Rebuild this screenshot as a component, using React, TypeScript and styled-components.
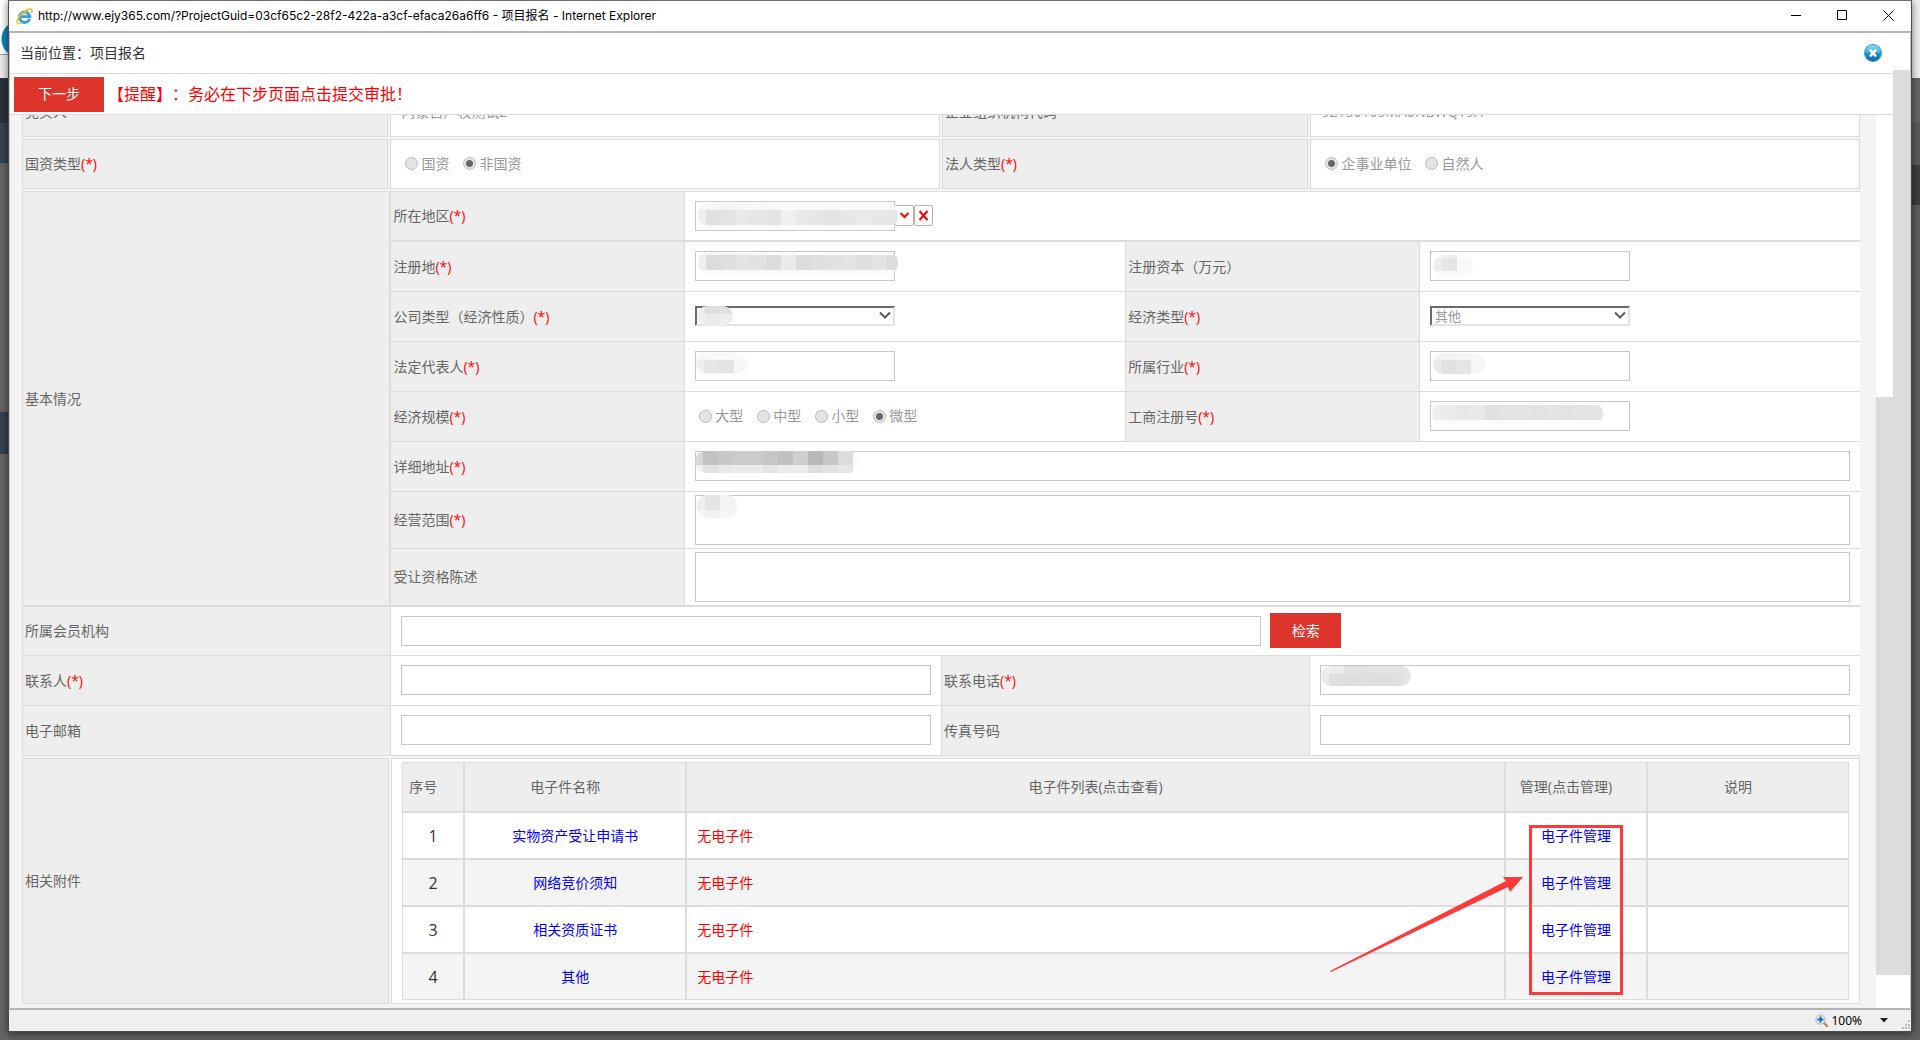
import React, { useLayoutEffect, useRef } from "react";
import styled, { createGlobalStyle, css } from "styled-components";

const line = "#dcdcdc";
const red = "#dd352c";

const GlobalStyle = createGlobalStyle`
  *, *::before, *::after { box-sizing: border-box; }
  body { margin: 0; overflow: hidden; }
  body, button, input, select, textarea {
    font-family: "Open Sans", "Noto Sans CJK SC", sans-serif;
    font-size: 14px;
    line-height: 20px;
    text-spacing-trim: space-all;
  }
`;

/* ---------- desktop and window frame ---------- */

const Desktop = styled.div`
  height: 100vh;
  padding: 0 8px 8px;
  background:
    radial-gradient(circle at 20px 39px, #0a86b8 18px, transparent 19px) left top / 8px 60px no-repeat,
    linear-gradient(#fff 54px, #9a9a9a 54px 55px, #ececec 55px 78px, #2b323c 78px 123px, #354152 123px 163px,
      #656565 163px 412px, #354152 412px 454px, #646464 454px) left / 8px 100% no-repeat,
    linear-gradient(#f0f0f0 78px, #646464 78px 123px, #5b5b5b 123px 165px, #3d3d3d 165px 205px, #5f5f5f 205px)
      right / 8px 100% no-repeat,
    #5e5e5e;
`;

const Window = styled.div`
  height: 100%;
  display: flex;
  flex-direction: column;
  background: #fff;
  border: 1px solid #4b4b4b;
  border-top-color: #6d6d6d;
  box-shadow: 0 1px 8px rgba(0, 0, 0, 0.55);
`;

const TitleBar = styled.header`
  flex: none;
  height: 30px;
  padding-left: 7px;
  display: flex;
  align-items: center;
  gap: 5px;
`;

const Title = styled.h1`
  flex: 1;
  margin: 0;
  font: 400 12px/16px Inter, "Noto Sans CJK SC", sans-serif;
  color: #000;
`;

const CaptionButtons = styled.div`
  align-self: flex-start;
  display: flex;
`;

const CaptionButton = styled.button`
  width: 46px;
  height: 28px;
  padding: 0;
  border: 0;
  background: none;
  display: grid;
  place-items: center;
`;

const Viewport = styled.div`
  flex: 1;
  min-height: 0;
  display: flex;
  border: solid #c4c4c4;
  border-width: 2px 1px;
  border-top-color: #b4b4b4;
  border-bottom-color: #b4b4b4;
`;

const Page = styled.main`
  flex: 1;
  min-width: 0;
  display: flex;
  flex-direction: column;
`;

const ScrollTrack = styled.div<{ $before: number }>`
  flex: none;
  width: 17px;
  padding: ${(p) => p.$before}px 0 33px;
  background: #fff;
`;

const ScrollThumb = styled.div`
  height: 100%;
  background: ${line};
`;

const StatusBar = styled.footer`
  flex: none;
  height: 21px;
  display: flex;
  align-items: center;
  justify-content: flex-end;
  background: #efefef;
  color: #000;
`;

const ZoomLevel = styled.button`
  display: flex;
  align-items: center;
  gap: 2px;
  margin-right: 14px;
  padding: 0;
  border: 0;
  background: none;
  font: 400 12px/16px "Noto Sans", sans-serif;

  svg:last-child { margin-left: 16px; }
`;

/* ---------- page header ---------- */

const Breadcrumb = styled.div`
  flex: none;
  height: 41px;
  padding: 0 10px;
  display: flex;
  align-items: center;
  justify-content: space-between;
  border-bottom: 1px solid ${line};
  color: #333;
`;

const IconButton = styled.button`
  display: flex;
  padding: 0;
  border: 0;
  background: none;
`;

const Toolbar = styled.div`
  flex: none;
  height: 41px;
  padding-left: 4px;
  display: flex;
  align-items: center;
  gap: 4px;
  border-bottom: 1px solid ${line};
`;

const RedButton = styled.button<{ $wide?: boolean }>`
  flex: none;
  width: ${(p) => (p.$wide ? 90 : 71)}px;
  height: 35px;
  padding: 0;
  border: 0;
  background: ${red};
  color: #fff;
`;

const Reminder = styled.strong`
  font-size: 16px;
  font-weight: 400;
  color: #f00;
`;

/* ---------- form ---------- */

const FormArea = styled.div`
  flex: 1;
  min-height: 0;
  display: flex;
`;

const Scroller = styled.div`
  flex: 1;
  min-width: 0;
  overflow: hidden;
  background: #f4f4f4;
`;

const Form = styled.form`
  padding: 0 16px 24px 12px;
  display: flex;
  flex-direction: column;
  gap: 2px;
  color: #666;
`;

const SpacedRow = styled.div`
  height: 50px;
  display: grid;
  grid-template-columns: 2fr 3fr 2fr 3fr;
  gap: 2px;

  > * { border: 1px solid ${line}; }
`;

const Block = styled.div`
  border-top: 1px solid ${line};
`;

const cell = css`
  min-width: 0;
  display: flex;
  align-items: center;
`;

const LabelCell = styled.div`
  ${cell}
  padding-left: 2px;
  background: #eee;
`;

const ValueCell = styled.div<{ $indent?: number }>`
  ${cell}
  padding: 0 10px 1px ${(p) => p.$indent ?? 10}px;
  background: #fff;
`;

const Required = styled.span`
  color: #f00;
`;

const Basics = styled.section`
  display: grid;
  grid-template-columns: minmax(0, 1fr) minmax(0, 4fr);
  border-left: 1px solid ${line};
  border-bottom: 2px solid ${line};
`;

const BasicRows = styled.div`
  margin-left: -1px;
  border-left: 1px solid ${line};
`;

const Row = styled.div<{ $split?: boolean; $height?: number; $heavy?: boolean; $last?: boolean }>`
  height: ${(p) => p.$height ?? 50}px;
  display: grid;
  grid-template-columns: ${(p) => (p.$split ? "2fr 3fr 2fr 3fr" : "1fr 4fr")};
  border-bottom: ${(p) => (p.$last ? 0 : p.$heavy ? 2 : 1)}px solid ${line};

  > ${LabelCell}, > ${ValueCell} { border-left: 1px solid ${line}; }
`;

const Field = styled.div<{ $fixed?: boolean }>`
  position: relative;
  display: flex;
  width: ${(p) => (p.$fixed ? "200px" : "100%")};
`;

const box = css`
  width: 100%;
  padding: 0 8px;
  border: 1px solid #c8c8c8;
  border-radius: 0;
  background: #fff;
  color: #666;
  outline: 0;
`;

const TextBox = styled.input`
  ${box}
  height: 30px;
`;

const TextArea = styled.textarea`
  ${box}
  height: 50px;
  resize: none;
`;

const Select = styled.select`
  appearance: none;
  width: 100%;
  height: 20px;
  padding: 0 24px 0 3px;
  border: 2px solid;
  border-color: #696969 #e3e3e3 #e3e3e3 #696969;
  border-radius: 0;
  background: #fff;
  color: #999;
  opacity: 1;
  font-size: 13px;
  line-height: 16px;
`;

const SelectArrow = styled.svg`
  position: absolute;
  top: 5px;
  right: 4px;
  pointer-events: none;
`;

const SmallButton = styled.button`
  width: 19px;
  height: 21px;
  padding: 0;
  border: 1px solid #b4b4b4;
  border-radius: 2px;
  background: #fff;
  display: grid;
  place-items: center;
`;

const SearchRow = styled.div`
  width: 100%;
  display: flex;
  align-items: center;
  gap: 9px;

  > input { width: calc(60% - 9px); }
`;

const RadioSet = styled.div`
  display: flex;
  gap: 14px;
  color: #999;
`;

const RadioLabel = styled.label`
  display: flex;
  align-items: center;
  gap: 3px;
`;

const Radio = styled.input`
  appearance: none;
  width: 13px;
  height: 13px;
  margin: 0;
  border: 1px solid #bcbcbc;
  border-radius: 50%;
  background: #e4e4e4;

  &:checked { background: radial-gradient(circle, #666 3px, #e4e4e4 4px); }
`;

const ReadOnly = styled.span`
  color: #999;
`;

/* ---------- masked values ---------- */

const Mask = styled.div<{ $x: number; $y: number; $w: number }>`
  position: absolute;
  left: ${(p) => p.$x}px;
  top: ${(p) => p.$y}px;
  width: ${(p) => p.$w}px;
  border-radius: 10px;
  overflow: hidden;
  pointer-events: none;
`;

const MaskRow = styled.div<{ $h: number }>`
  display: flex;
  height: ${(p) => p.$h}px;
`;

const MaskTile = styled.div<{ $first: boolean }>`
  flex: none;
  width: ${(p) => (p.$first ? 8 : 15)}px;
`;

type MaskSpec = { x: number; y: number; w: number; rows: [number, string][] };

/* Each pair of hex digits is the grey level of one tile. */
const masks: Record<string, MaskSpec> = {
  region: { x: 3, y: 2, w: 200, rows: [[7, "f7f6f5f6f7f8fafafafafafafaf6f3"], [15, "f0e0e3e8e7e4f0e8e6e3e7eae7e6e8"], [2, "fafafafafafafafafafafafafafafa"]] },
  place: { x: 3, y: 1, w: 200, rows: [[3, "f6f6f6f7f8fafafafafafafafafafa"], [15, "eedcdfe3e2ddebdcdfe2e3dfe3dde2"], [4, "fafafafafafafafafafafafafafafa"]] },
  capital: { x: 4, y: 4, w: 39, rows: [[3, "f6eefdfd"], [13, "eee5f9fb"], [6, "fafafafb"]] },
  company: { x: 2, y: 0, w: 36, rows: [[8, "ecdee0e8"], [12, "eeebeeef"]] },
  person: { x: 1, y: 2, w: 52, rows: [[7, "f7f8f8fafb"], [13, "efe5e4f7fa"]] },
  industry: { x: 3, y: 2, w: 52, rows: [[7, "f5f3f5f8fa"], [14, "ebe2e5f6f8"]] },
  licence: { x: 2, y: 2, w: 171, rows: [[2, "f9f9f9f9f9f9f9f9f9f9f9fafa"], [15, "efebe8e9e1e4e4e3e4e3e4e4f7"], [4, "fbfbfbfbfbfbfbfbfbfbfbfafa"]] },
  address: { x: 0, y: 0, w: 164, rows: [[14, "d8c2c8cbcbc6c1cfb8c7dcfa"], [8, "f1e2e9ecece5ebeddde3e6fa"]] },
  scope: { x: 2, y: 0, w: 40, rows: [[15, "efe4f4f7"], [8, "f6f2f7fb"]] },
  phone: { x: 1, y: 1, w: 90, rows: [[8, "ecece2e2e3e3e5"], [12, "ebdfdddfdee0e4"]] },
};

function MaskedValue({ name }: { name: string }) {
  const m = masks[name];
  return (
    <Mask $x={m.x} $y={m.y} $w={m.w}>
      {m.rows.map(([h, levels], r) => (
        <MaskRow key={r} $h={h}>
          {levels.match(/../g)!.map((v, i) => (
            <MaskTile key={i} $first={i === 0} style={{ background: `#${v}${v}${v}` }} />
          ))}
        </MaskRow>
      ))}
    </Mask>
  );
}

/* ---------- attachments ---------- */

const Attachments = styled.section`
  display: grid;
  grid-template-columns: minmax(0, 1fr) minmax(0, 4fr);
  gap: 2px;

  > * { border: 1px solid ${line}; }
`;

const TableCell = styled.div`
  position: relative;
  padding: 3px 10px;
  background: #fff;
`;

const Canvas = styled.div`
  position: relative;
`;

const Table = styled.table`
  width: 100%;
  table-layout: fixed;
  border-collapse: separate;
  border-spacing: 0;
  text-align: center;

  th, td {
    padding: 0;
    border: 1px solid ${line};
    font-weight: 400;
  }
  th { height: 50px; background: #eee; padding-right: 20px; }
  th:nth-child(3) { padding-right: 0; }
  td { height: 47px; }
  tbody tr:nth-child(even) { background: #f4f4f4; }
  td:first-child { font-size: 16px; color: #333; }
  td:nth-child(3) { padding-left: 10px; text-align: left; color: #f00; }
  a { color: #00f; text-decoration: none; }
`;

const Col = styled.col<{ $w?: number }>`
  width: ${(p) => (p.$w ? `${p.$w}px` : "auto")};
`;

const Highlight = styled.div`
  position: absolute;
  top: 63px;
  right: 226px;
  width: 94px;
  height: 170px;
  border: 3px solid #fd3a3a;
  pointer-events: none;
`;

const Arrow = styled.svg`
  position: absolute;
  top: 113px;
  right: 325px;
  pointer-events: none;
`;

/* ---------- pieces ---------- */

function Caption({ text, req, id }: { text: string; req?: boolean; id?: string }) {
  return (
    <LabelCell>
      <label htmlFor={id}>
        {text}
        {req && <Required>(*)</Required>}
      </label>
    </LabelCell>
  );
}

function Radios({ name, options, value }: { name: string; options: string[]; value: string }) {
  return (
    <RadioSet role="radiogroup">
      {options.map((o) => (
        <RadioLabel key={o}>
          <Radio type="radio" name={name} disabled defaultChecked={o === value} />
          {o}
        </RadioLabel>
      ))}
    </RadioSet>
  );
}

function Input({ id, mask, fixed }: { id: string; mask?: string; fixed?: boolean }) {
  return (
    <Field $fixed={fixed}>
      <TextBox id={id} type="text" />
      {mask && <MaskedValue name={mask} />}
    </Field>
  );
}

function DropDown({ id, value, mask }: { id: string; value?: string; mask?: string }) {
  return (
    <Field $fixed>
      <Select id={id} disabled>
        <option>{value}</option>
      </Select>
      <SelectArrow width="12" height="9" viewBox="0 0 12 9">
        <path d="M1 1.5 6 6.5 11 1.5" fill="none" stroke="#5a5a5a" strokeWidth="2" />
      </SelectArrow>
      {mask && <MaskedValue name={mask} />}
    </Field>
  );
}

function IeLogo() {
  return (
    <svg width="17" height="17" viewBox="0 0 17 17" aria-hidden="true">
      <path d="M13.6 10.8A5.2 5.2 0 1 1 13.8 8.6H5" fill="none" stroke="#2f9fe0" strokeWidth="2.8" />
      <path d="M12 6A4.4 4.4 0 0 0 4.6 6.4" fill="none" stroke="#7fd0f7" strokeWidth="1" />
      <path d="M2.6 15.6C-.6 14.6 2 8.6 7 4.6 11 1.2 15.4-.2 16 2.2c.2.8 0 1.8-.6 2.8" fill="none" stroke="#f2bd1d" strokeWidth="1.5" />
      <path d="M2.6 15.6c1 .3 2.2 0 3.6-.8" fill="none" stroke="#f2bd1d" strokeWidth="1.3" />
    </svg>
  );
}

function CloseBall() {
  return (
    <svg width="20" height="20" viewBox="0 0 20 20" aria-hidden="true">
      <defs>
        <linearGradient id="ball" x1="0" y1="0" x2="0" y2="1">
          <stop offset="0" stopColor="#9fdcec" />
          <stop offset=".45" stopColor="#45b5d8" />
          <stop offset=".55" stopColor="#1a8fc4" />
          <stop offset="1" stopColor="#1266a8" />
        </linearGradient>
      </defs>
      <circle cx="10" cy="10" r="8.5" fill="url(#ball)" stroke="#2ba4cc" />
      <path d="M7 6.6 13 13.4M13 6.6 7 13.4" stroke="#fff" strokeWidth="2.4" />
    </svg>
  );
}

const files = ["实物资产受让申请书", "网络竞价须知", "相关资质证书", "其他"];

export default function App() {
  const scroller = useRef<HTMLDivElement>(null);
  useLayoutEffect(() => {
    if (scroller.current) scroller.current.scrollTop = 28;
  }, []);

  return (
    <Desktop>
      <GlobalStyle />
      <Window>
        <TitleBar>
          <IeLogo />
          <Title>http://www.ejy365.com/?ProjectGuid=03cf65c2-28f2-422a-a3cf-efaca26a6ff6 - 项目报名 - Internet Explorer</Title>
          <CaptionButtons>
            <CaptionButton aria-label="最小化">
              <svg width="11" height="11" viewBox="0 0 11 11"><path d="M0 5.5h10" stroke="#000" /></svg>
            </CaptionButton>
            <CaptionButton aria-label="最大化">
              <svg width="11" height="11" viewBox="0 0 11 11"><path d="M.5.5h9v9h-9z" fill="none" stroke="#000" /></svg>
            </CaptionButton>
            <CaptionButton aria-label="关闭窗口">
              <svg width="11" height="11" viewBox="0 0 11 11"><path d="M.5.5 10.5 10.5M10.5.5.5 10.5" stroke="#000" /></svg>
            </CaptionButton>
          </CaptionButtons>
        </TitleBar>
        <Viewport>
          <Page>
            <Breadcrumb>
              <span>当前位置：项目报名</span>
              <IconButton aria-label="关闭"><CloseBall /></IconButton>
            </Breadcrumb>
            <Toolbar>
              <RedButton $wide>下一步</RedButton>
              <Reminder>【提醒】：务必在下步页面点击提交审批！</Reminder>
            </Toolbar>
            <FormArea>
              <Scroller ref={scroller}>
                <Form>
                  <SpacedRow>
                    <Caption text="竞买人" />
                    <ValueCell><ReadOnly>内蒙古产权测试2</ReadOnly></ValueCell>
                    <Caption text="企业组织机构代码" />
                    <ValueCell><ReadOnly>92150105MA0NBWQT9A</ReadOnly></ValueCell>
                  </SpacedRow>
                  <SpacedRow>
                    <Caption text="国资类型" req />
                    <ValueCell $indent={14}><Radios name="asset" options={["国资", "非国资"]} value="非国资" /></ValueCell>
                    <Caption text="法人类型" req />
                    <ValueCell $indent={14}><Radios name="legal" options={["企事业单位", "自然人"]} value="企事业单位" /></ValueCell>
                  </SpacedRow>
                  <Block>
                    <Basics>
                      <Caption text="基本情况" />
                      <BasicRows>
                        <Row $heavy>
                          <Caption text="所在地区" req id="region" />
                          <ValueCell>
                            <Input id="region" mask="region" fixed />
                            <SmallButton type="button" aria-label="选择">
                              <svg width="11" height="9" viewBox="0 0 11 9"><path d="M1.5 2 5.5 6 9.5 2" fill="none" stroke="#f00" strokeWidth="2" /></svg>
                            </SmallButton>
                            <SmallButton type="button" aria-label="清除">
                              <svg width="11" height="11" viewBox="0 0 11 11"><path d="M1.5 1 9.5 10M9.5 1 1.5 10" stroke="#f00" strokeWidth="2" /></svg>
                            </SmallButton>
                          </ValueCell>
                        </Row>
                        <Row $split>
                          <Caption text="注册地" req id="place" />
                          <ValueCell><Input id="place" mask="place" fixed /></ValueCell>
                          <Caption text="注册资本（万元）" id="capital" />
                          <ValueCell><Input id="capital" mask="capital" fixed /></ValueCell>
                        </Row>
                        <Row $split>
                          <Caption text="公司类型（经济性质）" req id="company" />
                          <ValueCell><DropDown id="company" mask="company" /></ValueCell>
                          <Caption text="经济类型" req id="economy" />
                          <ValueCell><DropDown id="economy" value="其他" /></ValueCell>
                        </Row>
                        <Row $split>
                          <Caption text="法定代表人" req id="person" />
                          <ValueCell><Input id="person" mask="person" fixed /></ValueCell>
                          <Caption text="所属行业" req id="industry" />
                          <ValueCell><Input id="industry" mask="industry" fixed /></ValueCell>
                        </Row>
                        <Row $split>
                          <Caption text="经济规模" req />
                          <ValueCell $indent={14}><Radios name="scale" options={["大型", "中型", "小型", "微型"]} value="微型" /></ValueCell>
                          <Caption text="工商注册号" req id="licence" />
                          <ValueCell><Input id="licence" mask="licence" fixed /></ValueCell>
                        </Row>
                        <Row>
                          <Caption text="详细地址" req id="address" />
                          <ValueCell><Input id="address" mask="address" /></ValueCell>
                        </Row>
                        <Row $height={57}>
                          <Caption text="经营范围" req id="scope" />
                          <ValueCell>
                            <Field>
                              <TextArea id="scope" />
                              <MaskedValue name="scope" />
                            </Field>
                          </ValueCell>
                        </Row>
                        <Row $height={56} $last>
                          <Caption text="受让资格陈述" id="statement" />
                          <ValueCell><TextArea id="statement" /></ValueCell>
                        </Row>
                      </BasicRows>
                    </Basics>
                    <Row $height={49}>
                      <Caption text="所属会员机构" id="member" />
                      <ValueCell>
                        <SearchRow>
                          <TextBox id="member" type="text" />
                          <RedButton type="button">检索</RedButton>
                        </SearchRow>
                      </ValueCell>
                    </Row>
                    <Row $split>
                      <Caption text="联系人" req id="contact" />
                      <ValueCell><Input id="contact" /></ValueCell>
                      <Caption text="联系电话" req id="phone" />
                      <ValueCell><Input id="phone" mask="phone" /></ValueCell>
                    </Row>
                    <Row $split>
                      <Caption text="电子邮箱" id="email" />
                      <ValueCell><Input id="email" /></ValueCell>
                      <Caption text="传真号码" id="fax" />
                      <ValueCell><Input id="fax" /></ValueCell>
                    </Row>
                  </Block>
                  <Attachments>
                    <Caption text="相关附件" />
                    <TableCell>
                      <Canvas>
                        <Table>
                          <colgroup>
                            <Col $w={62} />
                            <Col $w={222} />
                            <Col />
                            <Col $w={142} />
                            <Col $w={202} />
                          </colgroup>
                          <thead>
                            <tr>
                              <th>序号</th>
                              <th>电子件名称</th>
                              <th>电子件列表(点击查看)</th>
                              <th>管理(点击管理)</th>
                              <th>说明</th>
                            </tr>
                          </thead>
                          <tbody>
                            {files.map((f, i) => (
                              <tr key={f}>
                                <td>{i + 1}</td>
                                <td><a href="#file">{f}</a></td>
                                <td>无电子件</td>
                                <td><a href="#manage">电子件管理</a></td>
                                <td />
                              </tr>
                            ))}
                          </tbody>
                        </Table>
                        <Highlight />
                        <Arrow width="194" height="98" viewBox="0 0 194 98">
                          <path d="M0 96 176 6 173 2 193 2 180 17 178 12 1 97Z" fill="#fd3a3a" />
                        </Arrow>
                      </Canvas>
                    </TableCell>
                  </Attachments>
                </Form>
              </Scroller>
              <ScrollTrack $before={282}><ScrollThumb /></ScrollTrack>
            </FormArea>
          </Page>
          <ScrollTrack $before={37}><ScrollThumb /></ScrollTrack>
        </Viewport>
        <StatusBar>
          <ZoomLevel>
            <svg width="14" height="14" viewBox="0 0 14 14" aria-hidden="true">
              <path d="m8.5 8.5 4.3 4.3" stroke="#b98552" strokeWidth="2.2" />
              <circle cx="5.5" cy="5.5" r="4.6" fill="#e9f3fc" stroke="#9db4cc" />
              <path d="M5.5 2.5v6M2.5 5.5h6" stroke="#1b64c0" strokeWidth="2" />
            </svg>
            100%
            <svg width="8" height="5" viewBox="0 0 8 5" aria-hidden="true"><path d="M0 0h8L4 4.5Z" fill="#222" /></svg>
          </ZoomLevel>
          <svg width="9" height="20" viewBox="0 0 9 20" aria-hidden="true">
            <path d="M6 9h2v2H6zM3 13h2v2H3zM6 13h2v2H6zM0 16h2v2H0zM3 16h2v2H3zM6 16h2v2H6z" fill="#bdbdbd" />
          </svg>
        </StatusBar>
      </Window>
    </Desktop>
  );
}
